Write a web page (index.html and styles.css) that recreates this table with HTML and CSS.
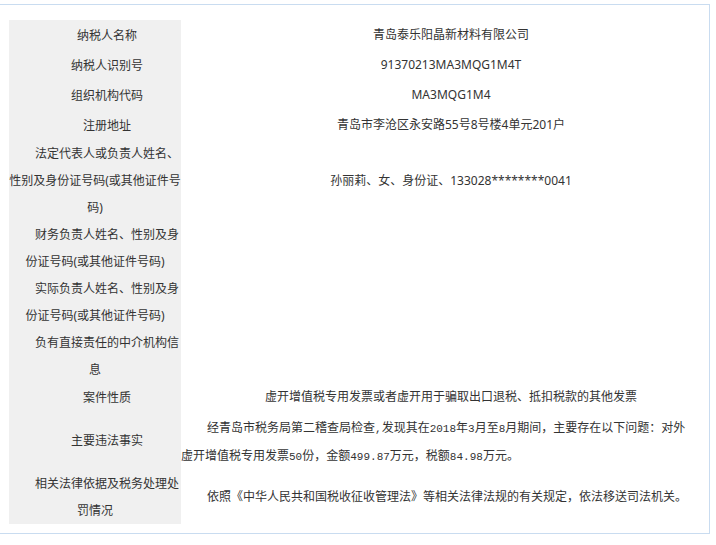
FILE: index.html
```html
<!DOCTYPE html>
<html lang="zh-CN">

<head>
    <meta charset="UTF-8">
    <meta name="viewport" content="width=device-width, initial-scale=1.0">
    <title>案件信息</title>
    <link rel="stylesheet" href="styles.css">
</head>

<body>
    <div class="frame">
        <table class="case-table">
            <tr>
                <td class="label">纳税人名称</td>
                <td class="val">青岛泰乐阳晶新材料有限公司</td>
            </tr>
            <tr>
                <td class="label">纳税人识别号</td>
                <td class="val">91370213MA3MQG1M4T</td>
            </tr>
            <tr>
                <td class="label">组织机构代码</td>
                <td class="val">MA3MQG1M4</td>
            </tr>
            <tr>
                <td class="label">注册地址</td>
                <td class="val">青岛市李沧区永安路55号8号楼4单元201户</td>
            </tr>
            <tr>
                <td class="label">法定代表人或负责人姓名、性别及身份证号码(或其他证件号码)</td>
                <td class="val">孙丽莉、女、身份证、133028********0041</td>
            </tr>
            <tr>
                <td class="label">财务负责人姓名、性别及身份证号码(或其他证件号码)</td>
                <td class="val"></td>
            </tr>
            <tr>
                <td class="label">实际负责人姓名、性别及身份证号码(或其他证件号码)</td>
                <td class="val"></td>
            </tr>
            <tr>
                <td class="label">负有直接责任的中介机构信息</td>
                <td class="val"></td>
            </tr>
            <tr>
                <td class="label">案件性质</td>
                <td class="val val-short">虚开增值税专用发票或者虚开用于骗取出口退税、抵扣税款的其他发票</td>
            </tr>
            <tr>
                <td class="label">主要违法事实</td>
                <td class="val">
                    <p class="fact">经青岛市税务局第二稽查局检查<span class="num">,</span>发现其在<span class="num">2018</span>年<span class="num">3</span>月至<span class="num">8</span>月期间，主要存在以下问题：对外虚开增值税专用发票<span class="num">50</span>份，金额<span class="num">499.87</span>万元，税额<span class="num">84.98</span>万元。</p>
                </td>
            </tr>
            <tr>
                <td class="label">相关法律依据及税务处理处罚情况</td>
                <td class="val">
                    <p class="fact fact-law">依照《中华人民共和国税收征收管理法》等相关法律法规的有关规定，依法移送司法机关。</p>
                </td>
            </tr>
        </table>
    </div>
</body>

</html>
```

FILE: styles.css
```css
body {
    margin: 0;
    font-family: "Noto Sans", "Noto Sans CJK SC", sans-serif;
    font-size: 12px;
    color: #333;
    background: #fff;
}

.frame {
    margin-top: 4px;
    width: 700px;
    padding: 15px 0 9px 9px;
    border: 1px solid #c9dcf0;
    border-left: none;
}

.case-table {
    border-collapse: collapse;
    border-spacing: 0;
}

.case-table td {
    padding: 0;
    text-align: center;
    text-indent: 2em;
    vertical-align: middle;
}

.label {
    width: 172px;
    background: #f0f0f0;
    line-height: 27px;
}

.val {
    width: 516px;
    line-height: 30px;
}

.val-short {
    line-height: 28px;
}

.fact {
    margin: 0;
    padding-top: 3px;
    text-align: left;
    text-indent: 26px;
    line-height: 28px;
}

.fact-law {
    padding-top: 0;
}

.num {
    font-family: "Liberation Mono", monospace;
    font-size: 11px;
    line-height: 12px;
}
```
